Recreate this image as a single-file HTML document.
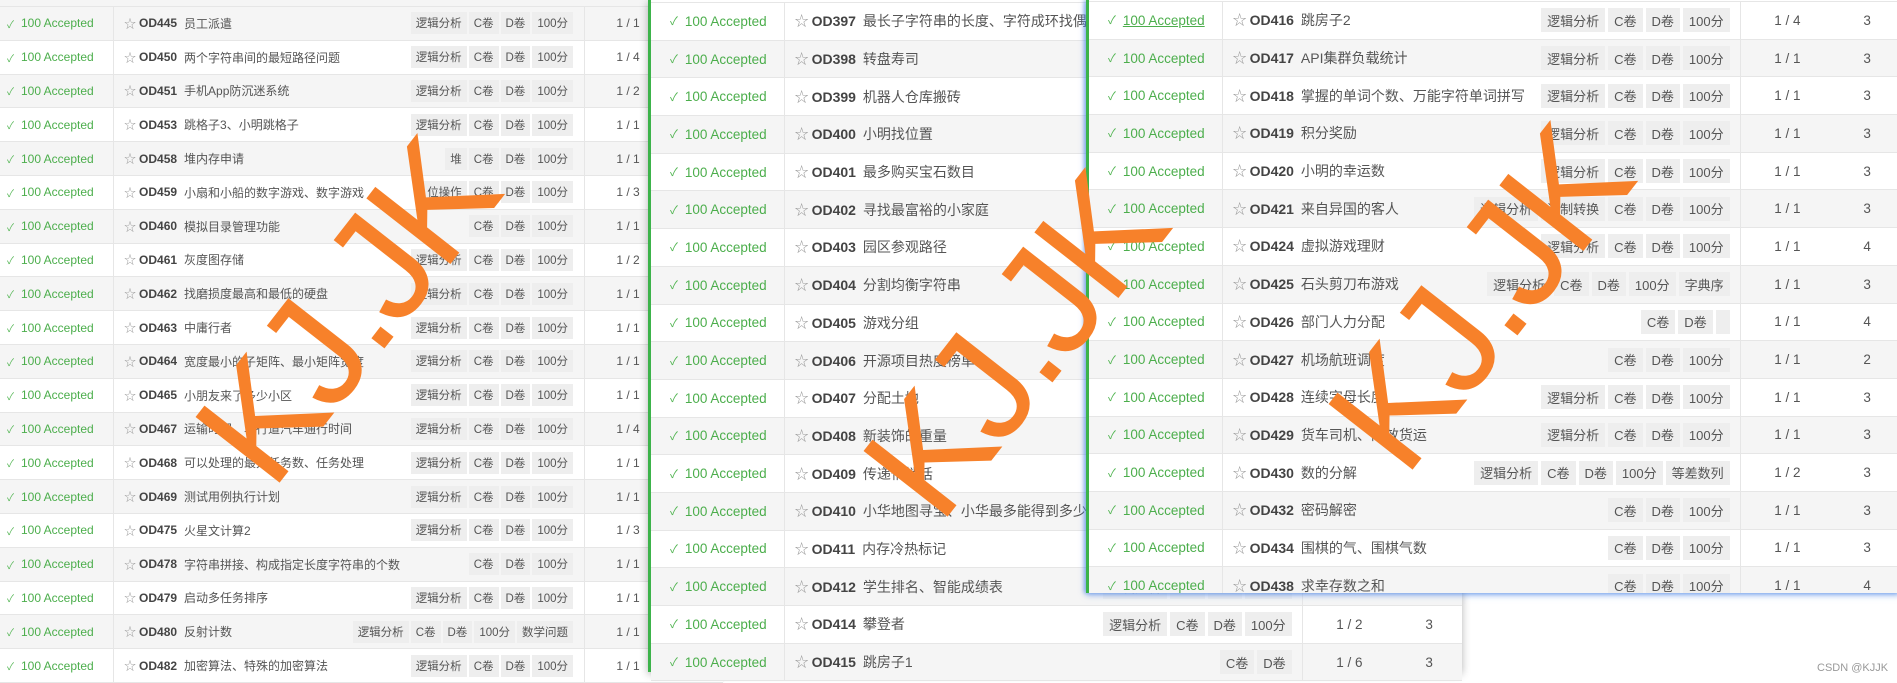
<!DOCTYPE html>
<html><head><meta charset="utf-8">
<style>
*{margin:0;padding:0;box-sizing:border-box}
body{width:1897px;height:682px;overflow:hidden;background:#fff;position:relative;font-family:"Liberation Sans","Noto Sans CJK SC",sans-serif;color:#444}
.p{position:absolute;background:#fff}
.r{display:flex;align-items:center;border-bottom:1px solid #e6e6e6;background:#fff;white-space:nowrap}
.r.g{background:#f5f5f5}
.s{height:100%;display:flex;align-items:center;border-right:1px solid #e6e6e6;color:#4cae4c}
.s span{color:#52b552;margin-right:7px;font-size:0.85em}
.t{height:100%;display:flex;align-items:center;border-right:1px solid #e6e6e6;overflow:hidden}
.t .st{color:#999;margin-right:3px}
.t b{color:#444;margin-right:7px}
.t .nm{color:#555}
.tg{margin-left:auto;display:flex}
.tg i{font-style:normal;background:#eee;color:#555;display:flex;align-items:center}
.f{text-align:center;color:#555}
.n{text-align:center;color:#555}
#L{left:0;top:0;width:723px;height:680px;font-size:12px;box-shadow:0 1px 3px rgba(0,0,0,.2)}
#L .r{height:33.8px}
#L .s{width:114px;padding-left:7px}
#L .t{width:471px;padding-left:10px;padding-right:11px}
#L .f{width:86px}#L .n{width:52px}
#L .tg i{height:22px;padding:0 5px;margin-left:2px;font-size:11.5px}
.M{width:814px;font-size:13.5px}
.M .r{height:37.7px}
.M .s{width:134px;padding-left:19px}
.M .t{width:520px;padding-left:10px;padding-right:10px;font-size:14px}
.M .f{width:94px}.M .n{width:66px}
.M .tg i{height:24px;padding:0 6px;margin-left:3px;font-size:13px}
#C{left:648px;top:0;height:672px;border-left:3px solid #3cb34a;box-shadow:0 2px 8px rgba(0,0,0,.3)}
#R{left:1086px;top:0;height:593px;border-left:3px solid #3cb34a;box-shadow:0 2px 6px rgba(70,130,230,.6),-2px 0 4px rgba(70,130,230,.5);overflow:hidden}
.top{background:#f5f5f5;border-bottom:1px solid #e6e6e6}
.wm{position:absolute;font-family:"Liberation Sans",sans-serif;font-size:155px;color:#f7812a;line-height:1;white-space:nowrap;transform:translate(-50%,-50%) rotate(-52deg);letter-spacing:-6px}
.cs{position:absolute;left:1817px;top:662px;font-size:11px;color:#999}
</style></head><body>

<div class="p" id="L">
<div class="top" style="height:7px"></div>
<div class="r g"><div class="s"><span>✓</span>100 Accepted</div><div class="t"><span class="st">☆</span><b>OD445</b><span class="nm">员工派遣</span><span class="tg"><i>逻辑分析</i><i>C卷</i><i>D卷</i><i>100分</i></span></div><div class="f">1 / 1</div><div class="n">3</div></div>
<div class="r"><div class="s"><span>✓</span>100 Accepted</div><div class="t"><span class="st">☆</span><b>OD450</b><span class="nm">两个字符串间的最短路径问题</span><span class="tg"><i>逻辑分析</i><i>C卷</i><i>D卷</i><i>100分</i></span></div><div class="f">1 / 4</div><div class="n">3</div></div>
<div class="r g"><div class="s"><span>✓</span>100 Accepted</div><div class="t"><span class="st">☆</span><b>OD451</b><span class="nm">手机App防沉迷系统</span><span class="tg"><i>逻辑分析</i><i>C卷</i><i>D卷</i><i>100分</i></span></div><div class="f">1 / 2</div><div class="n">3</div></div>
<div class="r"><div class="s"><span>✓</span>100 Accepted</div><div class="t"><span class="st">☆</span><b>OD453</b><span class="nm">跳格子3、小明跳格子</span><span class="tg"><i>逻辑分析</i><i>C卷</i><i>D卷</i><i>100分</i></span></div><div class="f">1 / 1</div><div class="n">3</div></div>
<div class="r g"><div class="s"><span>✓</span>100 Accepted</div><div class="t"><span class="st">☆</span><b>OD458</b><span class="nm">堆内存申请</span><span class="tg"><i>堆</i><i>C卷</i><i>D卷</i><i>100分</i></span></div><div class="f">1 / 1</div><div class="n">3</div></div>
<div class="r"><div class="s"><span>✓</span>100 Accepted</div><div class="t"><span class="st">☆</span><b>OD459</b><span class="nm">小扇和小船的数字游戏、数字游戏</span><span class="tg"><i>位操作</i><i>C卷</i><i>D卷</i><i>100分</i></span></div><div class="f">1 / 3</div><div class="n">3</div></div>
<div class="r g"><div class="s"><span>✓</span>100 Accepted</div><div class="t"><span class="st">☆</span><b>OD460</b><span class="nm">模拟目录管理功能</span><span class="tg"><i>C卷</i><i>D卷</i><i>100分</i></span></div><div class="f">1 / 1</div><div class="n">3</div></div>
<div class="r"><div class="s"><span>✓</span>100 Accepted</div><div class="t"><span class="st">☆</span><b>OD461</b><span class="nm">灰度图存储</span><span class="tg"><i>逻辑分析</i><i>C卷</i><i>D卷</i><i>100分</i></span></div><div class="f">1 / 2</div><div class="n">3</div></div>
<div class="r g"><div class="s"><span>✓</span>100 Accepted</div><div class="t"><span class="st">☆</span><b>OD462</b><span class="nm">找磨损度最高和最低的硬盘</span><span class="tg"><i>逻辑分析</i><i>C卷</i><i>D卷</i><i>100分</i></span></div><div class="f">1 / 1</div><div class="n">3</div></div>
<div class="r"><div class="s"><span>✓</span>100 Accepted</div><div class="t"><span class="st">☆</span><b>OD463</b><span class="nm">中庸行者</span><span class="tg"><i>逻辑分析</i><i>C卷</i><i>D卷</i><i>100分</i></span></div><div class="f">1 / 1</div><div class="n">3</div></div>
<div class="r g"><div class="s"><span>✓</span>100 Accepted</div><div class="t"><span class="st">☆</span><b>OD464</b><span class="nm">宽度最小的子矩阵、最小矩阵宽度</span><span class="tg"><i>逻辑分析</i><i>C卷</i><i>D卷</i><i>100分</i></span></div><div class="f">1 / 1</div><div class="n">3</div></div>
<div class="r"><div class="s"><span>✓</span>100 Accepted</div><div class="t"><span class="st">☆</span><b>OD465</b><span class="nm">小朋友来了多少小区</span><span class="tg"><i>逻辑分析</i><i>C卷</i><i>D卷</i><i>100分</i></span></div><div class="f">1 / 1</div><div class="n">3</div></div>
<div class="r g"><div class="s"><span>✓</span>100 Accepted</div><div class="t"><span class="st">☆</span><b>OD467</b><span class="nm">运输时间、单行道汽车通行时间</span><span class="tg"><i>逻辑分析</i><i>C卷</i><i>D卷</i><i>100分</i></span></div><div class="f">1 / 4</div><div class="n">3</div></div>
<div class="r"><div class="s"><span>✓</span>100 Accepted</div><div class="t"><span class="st">☆</span><b>OD468</b><span class="nm">可以处理的最大任务数、任务处理</span><span class="tg"><i>逻辑分析</i><i>C卷</i><i>D卷</i><i>100分</i></span></div><div class="f">1 / 1</div><div class="n">3</div></div>
<div class="r g"><div class="s"><span>✓</span>100 Accepted</div><div class="t"><span class="st">☆</span><b>OD469</b><span class="nm">测试用例执行计划</span><span class="tg"><i>逻辑分析</i><i>C卷</i><i>D卷</i><i>100分</i></span></div><div class="f">1 / 1</div><div class="n">3</div></div>
<div class="r"><div class="s"><span>✓</span>100 Accepted</div><div class="t"><span class="st">☆</span><b>OD475</b><span class="nm">火星文计算2</span><span class="tg"><i>逻辑分析</i><i>C卷</i><i>D卷</i><i>100分</i></span></div><div class="f">1 / 3</div><div class="n">3</div></div>
<div class="r g"><div class="s"><span>✓</span>100 Accepted</div><div class="t"><span class="st">☆</span><b>OD478</b><span class="nm">字符串拼接、构成指定长度字符串的个数</span><span class="tg"><i>C卷</i><i>D卷</i><i>100分</i></span></div><div class="f">1 / 1</div><div class="n">3</div></div>
<div class="r"><div class="s"><span>✓</span>100 Accepted</div><div class="t"><span class="st">☆</span><b>OD479</b><span class="nm">启动多任务排序</span><span class="tg"><i>逻辑分析</i><i>C卷</i><i>D卷</i><i>100分</i></span></div><div class="f">1 / 1</div><div class="n">3</div></div>
<div class="r g"><div class="s"><span>✓</span>100 Accepted</div><div class="t"><span class="st">☆</span><b>OD480</b><span class="nm">反射计数</span><span class="tg"><i>逻辑分析</i><i>C卷</i><i>D卷</i><i>100分</i><i>数学问题</i></span></div><div class="f">1 / 1</div><div class="n">3</div></div>
<div class="r"><div class="s"><span>✓</span>100 Accepted</div><div class="t"><span class="st">☆</span><b>OD482</b><span class="nm">加密算法、特殊的加密算法</span><span class="tg"><i>逻辑分析</i><i>C卷</i><i>D卷</i><i>100分</i></span></div><div class="f">1 / 1</div><div class="n">3</div></div>
</div>

<div class="p M" id="C">
<div class="top" style="height:3px;background:#fff"></div>
<div class="r"><div class="s"><span>✓</span>100 Accepted</div><div class="t"><span class="st">☆</span><b>OD397</b><span class="nm">最长子字符串的长度、字符成环找偶数O</span></div><div class="f">1 / 1</div><div class="n">3</div></div>
<div class="r g"><div class="s"><span>✓</span>100 Accepted</div><div class="t"><span class="st">☆</span><b>OD398</b><span class="nm">转盘寿司</span></div><div class="f">1 / 1</div><div class="n">3</div></div>
<div class="r"><div class="s"><span>✓</span>100 Accepted</div><div class="t"><span class="st">☆</span><b>OD399</b><span class="nm">机器人仓库搬砖</span></div><div class="f">1 / 1</div><div class="n">3</div></div>
<div class="r g"><div class="s"><span>✓</span>100 Accepted</div><div class="t"><span class="st">☆</span><b>OD400</b><span class="nm">小明找位置</span></div><div class="f">1 / 1</div><div class="n">3</div></div>
<div class="r"><div class="s"><span>✓</span>100 Accepted</div><div class="t"><span class="st">☆</span><b>OD401</b><span class="nm">最多购买宝石数目</span></div><div class="f">1 / 1</div><div class="n">3</div></div>
<div class="r g"><div class="s"><span>✓</span>100 Accepted</div><div class="t"><span class="st">☆</span><b>OD402</b><span class="nm">寻找最富裕的小家庭</span></div><div class="f">1 / 1</div><div class="n">3</div></div>
<div class="r"><div class="s"><span>✓</span>100 Accepted</div><div class="t"><span class="st">☆</span><b>OD403</b><span class="nm">园区参观路径</span></div><div class="f">1 / 1</div><div class="n">3</div></div>
<div class="r g"><div class="s"><span>✓</span>100 Accepted</div><div class="t"><span class="st">☆</span><b>OD404</b><span class="nm">分割均衡字符串</span></div><div class="f">1 / 1</div><div class="n">3</div></div>
<div class="r"><div class="s"><span>✓</span>100 Accepted</div><div class="t"><span class="st">☆</span><b>OD405</b><span class="nm">游戏分组</span></div><div class="f">1 / 1</div><div class="n">3</div></div>
<div class="r g"><div class="s"><span>✓</span>100 Accepted</div><div class="t"><span class="st">☆</span><b>OD406</b><span class="nm">开源项目热度榜单</span></div><div class="f">1 / 1</div><div class="n">3</div></div>
<div class="r"><div class="s"><span>✓</span>100 Accepted</div><div class="t"><span class="st">☆</span><b>OD407</b><span class="nm">分配土地</span></div><div class="f">1 / 1</div><div class="n">3</div></div>
<div class="r g"><div class="s"><span>✓</span>100 Accepted</div><div class="t"><span class="st">☆</span><b>OD408</b><span class="nm">新装饰的重量</span></div><div class="f">1 / 1</div><div class="n">3</div></div>
<div class="r"><div class="s"><span>✓</span>100 Accepted</div><div class="t"><span class="st">☆</span><b>OD409</b><span class="nm">传递悄悄话</span><span class="tg"><i>逻辑分析</i><i>C卷</i><i>D卷</i><i>100分</i></span></div><div class="f">1 / 1</div><div class="n">3</div></div>
<div class="r g"><div class="s"><span>✓</span>100 Accepted</div><div class="t"><span class="st">☆</span><b>OD410</b><span class="nm">小华地图寻宝、小华最多能得到多少克黄金</span></div><div class="f">1 / 1</div><div class="n">3</div></div>
<div class="r"><div class="s"><span>✓</span>100 Accepted</div><div class="t"><span class="st">☆</span><b>OD411</b><span class="nm">内存冷热标记</span><span class="tg"><i>逻辑分析</i><i>C卷</i><i>D卷</i><i>100分</i></span></div><div class="f">1 / 1</div><div class="n">3</div></div>
<div class="r g"><div class="s"><span>✓</span>100 Accepted</div><div class="t"><span class="st">☆</span><b>OD412</b><span class="nm">学生排名、智能成绩表</span><span class="tg"><i>逻辑分析</i><i>C卷</i><i>D卷</i><i>100分</i></span></div><div class="f">1 / 1</div><div class="n">3</div></div>
<div class="r"><div class="s"><span>✓</span>100 Accepted</div><div class="t"><span class="st">☆</span><b>OD414</b><span class="nm">攀登者</span><span class="tg"><i>逻辑分析</i><i>C卷</i><i>D卷</i><i>100分</i></span></div><div class="f">1 / 2</div><div class="n">3</div></div>
<div class="r g"><div class="s"><span>✓</span>100 Accepted</div><div class="t"><span class="st">☆</span><b>OD415</b><span class="nm">跳房子1</span><span class="tg"><i>C卷</i><i>D卷</i></span></div><div class="f">1 / 6</div><div class="n">3</div></div>
</div>

<div class="p M" id="R">
<div class="top" style="height:2px;background:#fff"></div>
<div class="r"><div class="s"><span>✓</span><u>100 Accepted</u></div><div class="t"><span class="st">☆</span><b>OD416</b><span class="nm">跳房子2</span><span class="tg"><i>逻辑分析</i><i>C卷</i><i>D卷</i><i>100分</i></span></div><div class="f">1 / 4</div><div class="n">3</div></div>
<div class="r g"><div class="s"><span>✓</span>100 Accepted</div><div class="t"><span class="st">☆</span><b>OD417</b><span class="nm">API集群负载统计</span><span class="tg"><i>逻辑分析</i><i>C卷</i><i>D卷</i><i>100分</i></span></div><div class="f">1 / 1</div><div class="n">3</div></div>
<div class="r"><div class="s"><span>✓</span>100 Accepted</div><div class="t"><span class="st">☆</span><b>OD418</b><span class="nm">掌握的单词个数、万能字符单词拼写</span><span class="tg"><i>逻辑分析</i><i>C卷</i><i>D卷</i><i>100分</i></span></div><div class="f">1 / 1</div><div class="n">3</div></div>
<div class="r g"><div class="s"><span>✓</span>100 Accepted</div><div class="t"><span class="st">☆</span><b>OD419</b><span class="nm">积分奖励</span><span class="tg"><i>逻辑分析</i><i>C卷</i><i>D卷</i><i>100分</i></span></div><div class="f">1 / 1</div><div class="n">3</div></div>
<div class="r"><div class="s"><span>✓</span>100 Accepted</div><div class="t"><span class="st">☆</span><b>OD420</b><span class="nm">小明的幸运数</span><span class="tg"><i>逻辑分析</i><i>C卷</i><i>D卷</i><i>100分</i></span></div><div class="f">1 / 1</div><div class="n">3</div></div>
<div class="r g"><div class="s"><span>✓</span>100 Accepted</div><div class="t"><span class="st">☆</span><b>OD421</b><span class="nm">来自异国的客人</span><span class="tg"><i>逻辑分析</i><i>进制转换</i><i>C卷</i><i>D卷</i><i>100分</i></span></div><div class="f">1 / 1</div><div class="n">3</div></div>
<div class="r"><div class="s"><span>✓</span>100 Accepted</div><div class="t"><span class="st">☆</span><b>OD424</b><span class="nm">虚拟游戏理财</span><span class="tg"><i>逻辑分析</i><i>C卷</i><i>D卷</i><i>100分</i></span></div><div class="f">1 / 1</div><div class="n">4</div></div>
<div class="r g"><div class="s"><span>✓</span>100 Accepted</div><div class="t"><span class="st">☆</span><b>OD425</b><span class="nm">石头剪刀布游戏</span><span class="tg"><i>逻辑分析</i><i>C卷</i><i>D卷</i><i>100分</i><i>字典序</i></span></div><div class="f">1 / 1</div><div class="n">3</div></div>
<div class="r"><div class="s"><span>✓</span>100 Accepted</div><div class="t"><span class="st">☆</span><b>OD426</b><span class="nm">部门人力分配</span><span class="tg"><i>C卷</i><i>D卷</i><i style="width:14px"></i></span></div><div class="f">1 / 1</div><div class="n">4</div></div>
<div class="r g"><div class="s"><span>✓</span>100 Accepted</div><div class="t"><span class="st">☆</span><b>OD427</b><span class="nm">机场航班调度</span><span class="tg"><i>C卷</i><i>D卷</i><i>100分</i></span></div><div class="f">1 / 1</div><div class="n">2</div></div>
<div class="r"><div class="s"><span>✓</span>100 Accepted</div><div class="t"><span class="st">☆</span><b>OD428</b><span class="nm">连续字母长度</span><span class="tg"><i>逻辑分析</i><i>C卷</i><i>D卷</i><i>100分</i></span></div><div class="f">1 / 1</div><div class="n">3</div></div>
<div class="r g"><div class="s"><span>✓</span>100 Accepted</div><div class="t"><span class="st">☆</span><b>OD429</b><span class="nm">货车司机、高效货运</span><span class="tg"><i>逻辑分析</i><i>C卷</i><i>D卷</i><i>100分</i></span></div><div class="f">1 / 1</div><div class="n">3</div></div>
<div class="r"><div class="s"><span>✓</span>100 Accepted</div><div class="t"><span class="st">☆</span><b>OD430</b><span class="nm">数的分解</span><span class="tg"><i>逻辑分析</i><i>C卷</i><i>D卷</i><i>100分</i><i>等差数列</i></span></div><div class="f">1 / 2</div><div class="n">3</div></div>
<div class="r g"><div class="s"><span>✓</span>100 Accepted</div><div class="t"><span class="st">☆</span><b>OD432</b><span class="nm">密码解密</span><span class="tg"><i>C卷</i><i>D卷</i><i>100分</i></span></div><div class="f">1 / 1</div><div class="n">3</div></div>
<div class="r"><div class="s"><span>✓</span>100 Accepted</div><div class="t"><span class="st">☆</span><b>OD434</b><span class="nm">围棋的气、围棋气数</span><span class="tg"><i>C卷</i><i>D卷</i><i>100分</i></span></div><div class="f">1 / 1</div><div class="n">3</div></div>
<div class="r g"><div class="s"><span>✓</span>100 Accepted</div><div class="t"><span class="st">☆</span><b>OD438</b><span class="nm">求幸存数之和</span><span class="tg"><i>C卷</i><i>D卷</i><i>100分</i></span></div><div class="f">1 / 1</div><div class="n">4</div></div>
</div>

<div class="wm" style="left:345px;top:312px">KJ.JK</div>
<div class="wm" style="left:1013px;top:346px">KJ.JK</div>
<div class="wm" style="left:1478px;top:299px">KJ.JK</div>
<div class="cs">CSDN @KJJK</div>
</body></html>
